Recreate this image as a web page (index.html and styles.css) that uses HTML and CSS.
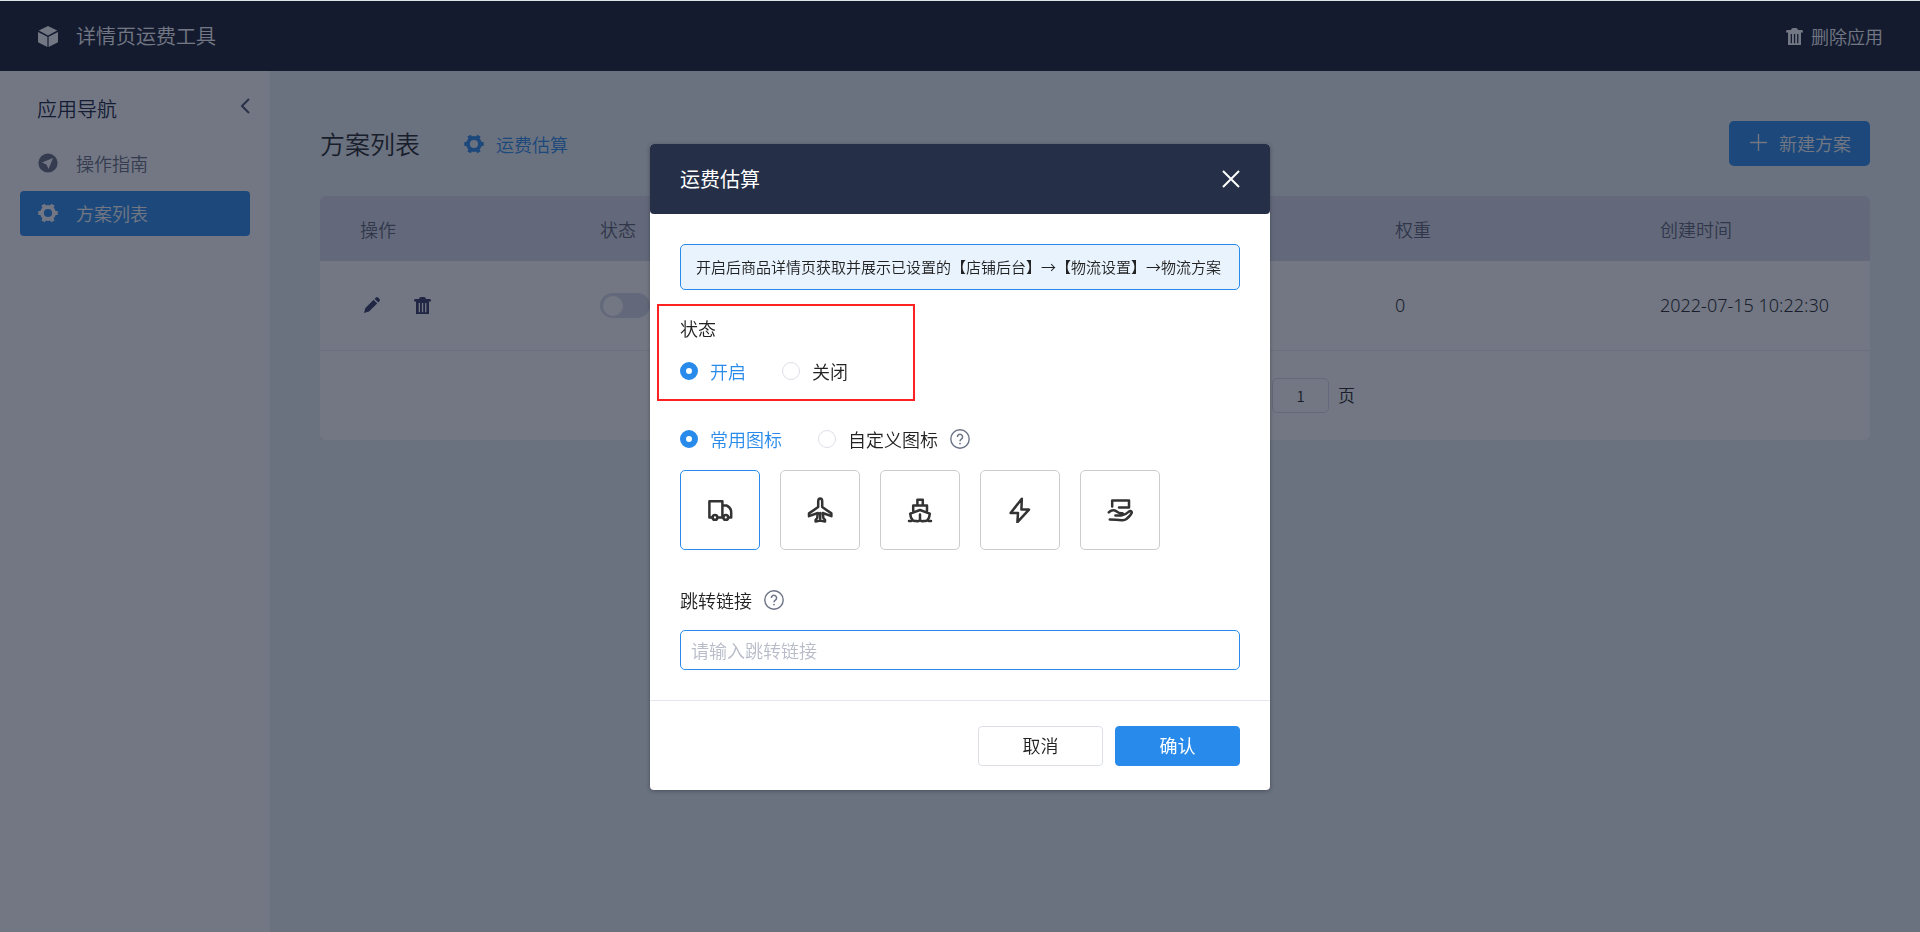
FILE: index.html
```html
<!DOCTYPE html>
<html lang="zh-CN">
<head>
<meta charset="utf-8">
<title>详情页运费工具</title>
<link rel="stylesheet" href="styles.css">
</head>
<body>
<svg class="sprite" aria-hidden="true">
  <symbol id="gear" viewBox="0 0 20 20"><circle cx="10" cy="10" r="6" fill="none" stroke="currentColor" stroke-width="3.8"/><path d="M.3 8H3V12H.3ZM17 8H19.7V12H17ZM3.4 2.6 6.8 .7 8.2 3.2 4.8 5.2ZM16.6 2.6 13.2 .7 11.8 3.2 15.2 5.2ZM3.4 17.4 6.8 19.3 8.2 16.8 4.8 14.8ZM16.6 17.4 13.2 19.3 11.8 16.8 15.2 14.8Z"/></symbol>
  <symbol id="trash" viewBox="0 0 17 17"><path fill-rule="evenodd" d="M5 2Q5.4 0 7 0H10Q11.6 0 12 2H16Q17 2 17 4.4H0Q0 2 1 2ZM2 4.4H15V17H2ZM4.7 6V15.2H6V6ZM7.9 6V15.2H9.2V6ZM11.1 6V15.2H12.4V6Z"/></symbol>
  <symbol id="help" viewBox="0 0 20 20"><circle cx="10" cy="10" r="9.2" fill="none" stroke="currentColor" stroke-width="1.4"/><path d="M7.4 8A2.6 2.6 0 1 1 11.4 10.1Q10 11 10 12.3" fill="none" stroke="currentColor" stroke-width="1.5"/><circle cx="10" cy="14.6" r=".9"/></symbol>
</svg>

<header class="topbar">
  <div class="brand">
    <svg class="icon brand-icon" viewBox="0 0 20 21"><path d="M10 0 19.2 4.6 10 9.4 .8 4.6ZM0 6 9.4 10.8V21L0 16.2ZM20 6V16.2L10.6 21V10.8Z"/></svg>
    <span>详情页运费工具</span>
  </div>
  <button class="remove" type="button"><svg class="icon trash"><use href="#trash"/></svg>删除应用</button>
</header>

<div class="layout">
  <nav class="sidebar">
    <div class="sidebar-head">
      <h2>应用导航</h2>
      <button class="collapse" type="button" aria-label="收起"><svg viewBox="0 0 10 16"><path d="M9 1 2 8 9 15" fill="none" stroke="currentColor" stroke-width="2"/></svg></button>
    </div>
    <a class="nav-item" href="#guide"><svg class="icon" viewBox="0 0 20 20"><path fill-rule="evenodd" d="M10 .4A9.6 9.6 0 1 1 10 19.6 9.6 9.6 0 0 1 10 .4ZM15 5 4 9.6 8.4 11.4 10.6 16Z"/></svg>操作指南</a>
    <a class="nav-item active" href="#plans"><svg class="icon"><use href="#gear"/></svg>方案列表</a>
  </nav>

  <main class="content">
    <div class="page-head">
      <h1>方案列表</h1>
      <a class="estimate" href="#estimate"><svg class="icon"><use href="#gear"/></svg>运费估算</a>
      <button class="create" type="button"><svg viewBox="0 0 18 18"><path d="M9 0V18M0 9H18" stroke="currentColor" stroke-width="1.4"/></svg>新建方案</button>
    </div>
    <section class="card">
      <table class="plans">
        <colgroup><col class="c-act"><col class="c-state"><col><col class="c-weight"><col class="c-time"></colgroup>
        <thead><tr><th>操作</th><th>状态</th><th></th><th>权重</th><th>创建时间</th></tr></thead>
        <tbody><tr>
          <td><div class="actions">
            <button type="button" aria-label="编辑"><svg class="icon pencil" viewBox="0 0 16 16"><path d="M0 16 1.4 11 9.6 2.8 13.2 6.4 5 14.6ZM10.6 1.8 12 .5Q13 -.4 14 .6L15.5 2Q16.4 3 15.5 4L14.2 5.4Z"/></svg></button>
            <button type="button" aria-label="删除"><svg class="icon trash"><use href="#trash"/></svg></button>
          </div></td>
          <td><input class="switch" type="checkbox" aria-label="状态"></td>
          <td></td><td>0</td><td>2022-07-15 10:22:30</td>
        </tr></tbody>
      </table>
      <div class="pager"><input id="page" type="text" value="1"><label for="page">页</label></div>
    </section>
  </main>
</div>

<div class="overlay">
  <form class="modal" role="dialog" aria-labelledby="dlg-title">
    <div class="modal-head">
      <h2 id="dlg-title">运费估算</h2>
      <button class="close" type="button" aria-label="关闭"><svg viewBox="0 0 18 18"><path d="M1 1 17 17M17 1 1 17" stroke="currentColor" stroke-width="2"/></svg></button>
    </div>
    <div class="modal-body">
      <p class="notice">开启后商品详情页获取并展示已设置的【店铺后台】→【物流设置】→物流方案</p>
      <div class="field">
        <span class="field-label">状态</span>
        <div class="radios">
          <label><input type="radio" name="state" checked><span>开启</span></label>
          <label><input type="radio" name="state"><span>关闭</span></label>
        </div>
      </div>
      <div class="radios icon-type">
        <label><input type="radio" name="kind" checked><span>常用图标</span></label>
        <label><input type="radio" name="kind"><span>自定义图标</span></label>
        <svg class="help"><use href="#help"/></svg>
      </div>
      <div class="tiles">
        <button class="tile selected" type="button" aria-label="货车"><svg viewBox="0 0 26 26"><path d="M5 20.4H2.4V4.2H15.4V20.4H11M15.4 8.4H19.4Q24.2 10.6 24.2 15.4V20.4H22.4M15.4 20.4H16"/><circle cx="8" cy="20.4" r="2.4"/><circle cx="18.8" cy="20.4" r="2.4"/></svg></button>
        <button class="tile" type="button" aria-label="飞机"><svg viewBox="0 0 26 26"><path d="M13.2 1.4Q15.2 1.4 15.2 4.4V10L24.4 16.4V19.2L15.8 16 16.4 21.2 18 22.8V24.6L13.2 23.6 8.6 24.6V22.8L10.2 21.2 10.8 16 2 19.2V16.4L11.2 10V4.4Q11.2 1.4 13.2 1.4ZM13.2 16V22"/></svg></button>
        <button class="tile" type="button" aria-label="轮船"><svg viewBox="0 0 26 26"><path d="M10.4 8.4V2.8H15.8V8.4M6.2 14.2V8.6H20V14.2M5.6 23Q3.4 20.4 3.2 16.6L13 13 22.8 16.6Q22.6 20.4 20.6 23M13 17.6V23M2 24H4Q5.6 22.8 7.4 24H9.4Q11.2 24.6 13 23.2 14.8 24.6 16.8 24H18.8Q20.6 22.8 22 24H24"/></svg></button>
        <button class="tile" type="button" aria-label="闪电"><svg viewBox="0 0 26 26"><path d="M14.8 1.8 3.6 16H11L10.4 25.2 22 12.6H14.4Z"/></svg></button>
        <button class="tile" type="button" aria-label="手托"><svg viewBox="0 0 26 26"><path d="M5.2 9.6V3.4H22V10.6H12M1.8 15.4Q5.4 11.6 9.6 14.4 12.4 16.6 15.4 16.2 17 18 14 18.4H8.4M15 18.2Q19 17.6 21.4 15 24 13 24.8 15.2 24.6 17.6 19.4 22 17.6 23.4 15 23.2 9 22.6 2.8 22.6"/></svg></button>
      </div>
      <div class="link-label"><label for="jump">跳转链接</label><svg class="help"><use href="#help"/></svg></div>
      <input class="link-input" id="jump" type="text" placeholder="请输入跳转链接">
      <div class="marker"></div>
    </div>
    <div class="modal-foot">
      <button class="btn" type="button">取消</button>
      <button class="btn primary" type="button">确认</button>
    </div>
  </form>
</div>
</body>
</html>
```
FILE: styles.css
```css
* { box-sizing: border-box; }
body {
  margin: 0;
  min-height: 100vh;
  display: flex;
  flex-direction: column;
  border-top: 1px solid #dde6e6;
  background: #ebeff6;
  color: #222;
  font: 350 18px/28px "Noto Sans CJK SC", sans-serif;
}
h1, h2, p { margin: 0; font-weight: inherit; }
button, input { font: inherit; color: inherit; }
button { padding: 0; border: 0; background: none; cursor: pointer; }
a { color: inherit; text-decoration: none; }
svg { display: block; flex: none; fill: currentColor; }
.sprite { position: absolute; width: 0; height: 0; }
.icon { width: 20px; height: 20px; }
.trash { width: 17px; height: 17px; }
.pencil { width: 16px; height: 16px; }

.topbar {
  height: 70px;
  padding: 0 37px 0 38px;
  display: flex;
  align-items: center;
  justify-content: space-between;
  background: #151b2f;
  color: #fff;
}
.brand { display: flex; align-items: center; gap: 18px; font-size: 20px; }
.brand-icon { height: 21px; }
.remove { display: flex; align-items: center; gap: 8px; }

.layout { flex: 1; display: flex; }
.sidebar { width: 270px; flex: none; padding: 20px; background: #fff; }
.sidebar-head {
  display: flex;
  justify-content: space-between;
  align-items: flex-start;
  padding: 3px 0 0 17px;
  margin-bottom: 17px;
  color: #17203a;
}
.sidebar-head h2 { font-size: 20px; line-height: 30px; }
.collapse { padding-top: 4px; color: #4b4f70; }
.collapse svg { width: 10px; height: 16px; }
.nav-item {
  display: flex;
  align-items: center;
  gap: 18px;
  height: 45px;
  margin-bottom: 5px;
  padding: 0 0 2px 18px;
  border-radius: 4px;
  color: #666b80;
}
.nav-item.active { background: #288beb; color: #fff; }

.content { flex: 1; min-width: 0; padding: 50px; }
.page-head { display: flex; align-items: center; margin-bottom: 30px; }
.page-head h1 { padding-bottom: 2px; font-size: 25px; line-height: 36px; }
.estimate { display: flex; align-items: center; gap: 12px; margin-left: 44px; color: #288beb; }
.create {
  display: flex;
  align-items: center;
  gap: 12px;
  height: 45px;
  padding: 0 19px 2px 21px;
  margin-left: auto;
  border-radius: 5px;
  background: #288beb;
  color: #fff;
}
.create svg { width: 17px; height: 17px; }

.card { border-radius: 6px; overflow: hidden; background: #fff; }
.plans { width: 100%; table-layout: fixed; border-collapse: collapse; }
.plans th, .plans td { padding: 0 0 0 40px; text-align: left; font-weight: inherit; }
.plans th { height: 65px; background: #dadde9; color: #5c5f73; }
.plans td { height: 89px; border-bottom: 1px solid #e8eaf2; font-family: "Noto Sans", "Noto Sans CJK SC", sans-serif; }
.c-act, .c-state { width: 240px; }
.c-weight { width: 265px; }
.c-time { width: 250px; }
.actions { display: flex; align-items: center; gap: 34px; padding-left: 4px; color: #323663; }
.switch {
  appearance: none;
  display: block;
  width: 50px;
  height: 25px;
  margin: 0;
  padding: 3px;
  border-radius: 13px;
  background: #dadde9;
}
.switch::before { content: ""; display: block; width: 20px; height: 20px; border-radius: 50%; background: #fff; }
.pager {
  display: flex;
  align-items: center;
  justify-content: flex-end;
  gap: 9px;
  height: 89px;
  padding-right: 515px;
  font-size: 17px;
}
.pager input {
  width: 57px;
  height: 35px;
  border: 1px solid #dadde9;
  border-radius: 5px;
  background: none;
  text-align: center;
  font-size: 15px;
}

.overlay {
  position: fixed;
  inset: 1px 0 0;
  padding-top: 1px;
  display: flex;
  align-items: center;
  justify-content: center;
  background: rgba(20, 29, 48, .6);
}
.modal { width: 620px; border-radius: 4px; background: #fff; box-shadow: 0 1px 4px rgba(0, 0, 0, .3); }
.modal-head {
  display: flex;
  align-items: center;
  justify-content: space-between;
  height: 70px;
  padding: 0 30px;
  border-radius: 4px;
  background: #253048;
  color: #fff;
}
.modal-head h2 { font-size: 20px; font-weight: 400; }
.close svg { width: 18px; height: 18px; }
.modal-body { position: relative; padding: 30px; }
.notice {
  padding: 9px 15px;
  border: 1px solid #288beb;
  border-radius: 5px;
  background: #e8f3fd;
  font-size: 15px;
  line-height: 26px;
  white-space: nowrap;
}
.field { margin-top: 24px; }
.field-label { display: block; margin-bottom: 15px; }
.radios { display: flex; align-items: center; gap: 36px; }
.radios label { display: flex; align-items: center; gap: 12px; }
.radios input {
  appearance: none;
  width: 18px;
  height: 18px;
  margin: 0;
  border: 1px solid #dcdfe6;
  border-radius: 50%;
  background: #fff;
}
.radios input:checked { border: 6px solid #288beb; }
.radios input:checked + span { color: #288beb; }
.icon-type { margin-top: 40px; }
.help { width: 20px; height: 20px; color: #6b7385; }
.icon-type .help { margin-left: -24px; }
.tiles { display: flex; gap: 20px; margin-top: 17px; }
.tile {
  display: flex;
  align-items: center;
  justify-content: center;
  width: 80px;
  height: 80px;
  border: 1px solid #ccc;
  border-radius: 5px;
}
.tile.selected { border-color: #288beb; }
.tile svg { width: 26px; height: 26px; fill: none; stroke: #333; stroke-width: 2.5; stroke-linecap: round; stroke-linejoin: round; }
.link-label { display: flex; align-items: center; gap: 12px; margin: 36px 0 16px; }
.link-input {
  display: block;
  width: 100%;
  height: 40px;
  padding: 0 10px;
  border: 1px solid #288beb;
  border-radius: 5px;
}
.link-input::placeholder { color: #b8bcc8; }
.marker { position: absolute; left: 7px; top: 90px; width: 258px; height: 97px; border: 2px solid #f22; }
.modal-foot {
  display: flex;
  justify-content: flex-end;
  gap: 12px;
  padding: 25px 30px 24px;
  border-top: 1px solid #e4e7ed;
}
.btn { width: 125px; height: 40px; padding-bottom: 3px; border: 1px solid #dcdfe6; border-radius: 4px; }
.btn.primary { border-color: #288beb; background: #288beb; color: #fff; font-weight: 400; }
```
